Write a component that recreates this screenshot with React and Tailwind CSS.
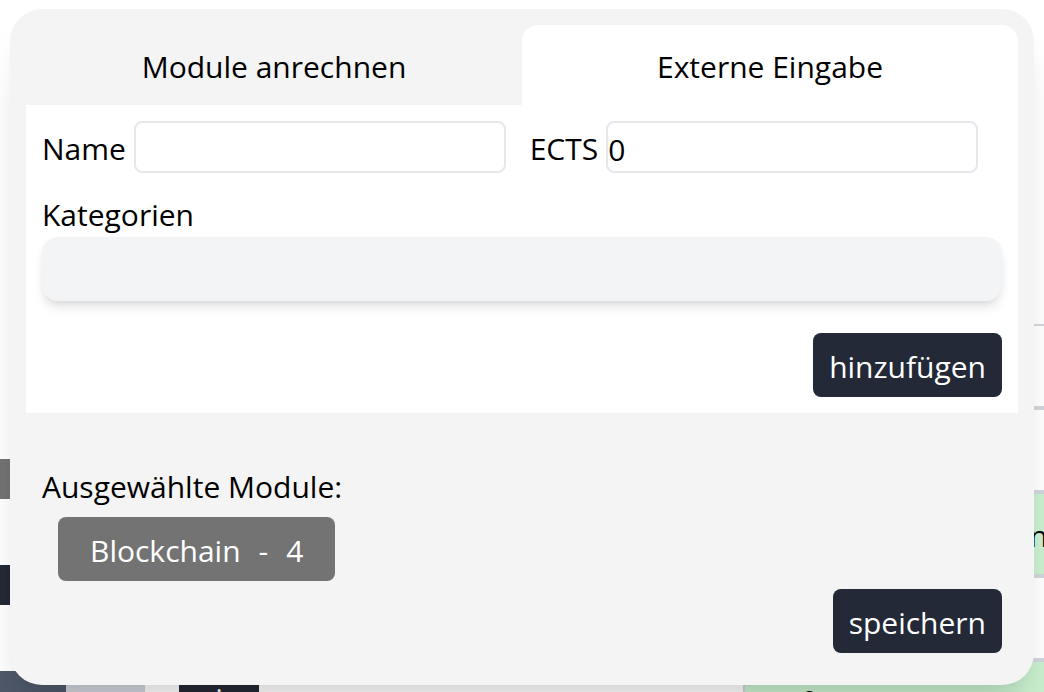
import { useState } from "react";

function Backdrop() {
  return (
    <div
      aria-hidden="true"
      className="absolute inset-0 flex justify-between overflow-hidden bg-white"
    >
      <div className="flex flex-col pt-[459px]">
        <div className="h-10 w-4 shrink-0 bg-[#737373]" />
        <div className="mt-[66px] h-10 w-4 shrink-0 bg-[#232936]" />
        <div className="mt-[66px] flex h-20 shrink-0">
          <div className="w-[66px] bg-[#4f596b]" />
          <div className="w-[79px] bg-gray-300" />
          <div className="ml-[34px] flex w-20 justify-center bg-[#232936] pt-1 text-white">i</div>
        </div>
      </div>
      <div className="flex w-[301px] shrink-0 flex-col pt-[324px]">
        <div className="h-[82px] shrink-0 border-t-2 border-gray-300" />
        <div className="h-[84px] shrink-0 border-t-4 border-gray-300" />
        <div className="flex h-[84px] shrink-0 items-center justify-end border-t-4 border-gray-300 bg-[#c9f0cf]">
          <span className="-mr-1 pt-1">n</span>
        </div>
        <div className="h-[84px] shrink-0 border-t-4 border-gray-300" />
        <div className="h-[84px] shrink-0 border-t-4 border-l-2 border-gray-300 bg-[#c9f0cf] pt-4 pl-14">
          f
        </div>
      </div>
    </div>
  );
}

const field =
  "h-[52px] w-full min-w-0 rounded-lg border-2 border-gray-200 bg-white p-0 pt-1 outline-none";
const tab = "rounded-t-2xl px-4 pt-[18px] pb-[14px]";
const action = "rounded-lg bg-[#232936] px-4 pt-[10px] pb-[6px] text-white";
const heading = "pt-1 leading-[44px]";

export default function App() {
  const [name, setName] = useState("");
  const [ects, setEcts] = useState("0");

  return (
    <div className="relative min-h-screen overflow-hidden font-['Open_Sans',sans-serif] text-[30px] leading-[48px] text-black">
      <Backdrop />
      <main className="relative mx-[10px] mt-[9px] mb-[7px] rounded-[32px] bg-[#f4f4f4] p-4 pb-8 shadow-[0_40px_50px_-10px_rgb(0_0_0/0.1),0_16px_20px_-12px_rgb(0_0_0/0.1)]">
        <div role="tablist" className="grid grid-cols-2">
          <button type="button" role="tab" aria-selected="false" className={tab}>
            Module anrechnen
          </button>
          <button type="button" role="tab" aria-selected="true" className={`${tab} bg-white`}>
            Externe Eingabe
          </button>
        </div>

        <form className="bg-white p-4" onSubmit={(e) => e.preventDefault()}>
          <div className="grid grid-cols-[auto_1fr_auto_1fr] items-center pr-6">
            <label htmlFor="name" className="pt-1 pr-2">Name</label>
            <input
              id="name"
              type="text"
              value={name}
              onChange={(e) => setName(e.target.value)}
              className={field}
            />
            <label htmlFor="ects" className="pt-1 pr-2 pl-6">ECTS</label>
            <input
              id="ects"
              type="text"
              inputMode="numeric"
              value={ects}
              onChange={(e) => setEcts(e.target.value)}
              className={field}
            />
          </div>
          <h2 className={`${heading} mt-4`}>Kategorien</h2>
          <div className="h-16 rounded-2xl bg-gray-100 shadow-[0_8px_12px_-2px_rgb(0_0_0/0.1),0_4px_8px_-4px_rgb(0_0_0/0.1)]" />
          <div className="mt-8 flex justify-end">
            <button type="submit" className={action}>hinzufügen</button>
          </div>
        </form>

        <section className="mt-12 px-4">
          <h2 className={heading}>Ausgewählte Module:</h2>
          <div className="mt-2 flex pl-4">
            <button
              type="button"
              className="flex gap-[18px] rounded-lg bg-[#737373] px-8 pt-[10px] pb-[6px] text-white"
            >
              <span>Blockchain</span>
              <span>-</span>
              <span>4</span>
            </button>
          </div>
          <div className="mt-2 flex justify-end">
            <button type="button" className={action}>speichern</button>
          </div>
        </section>
      </main>
    </div>
  );
}
